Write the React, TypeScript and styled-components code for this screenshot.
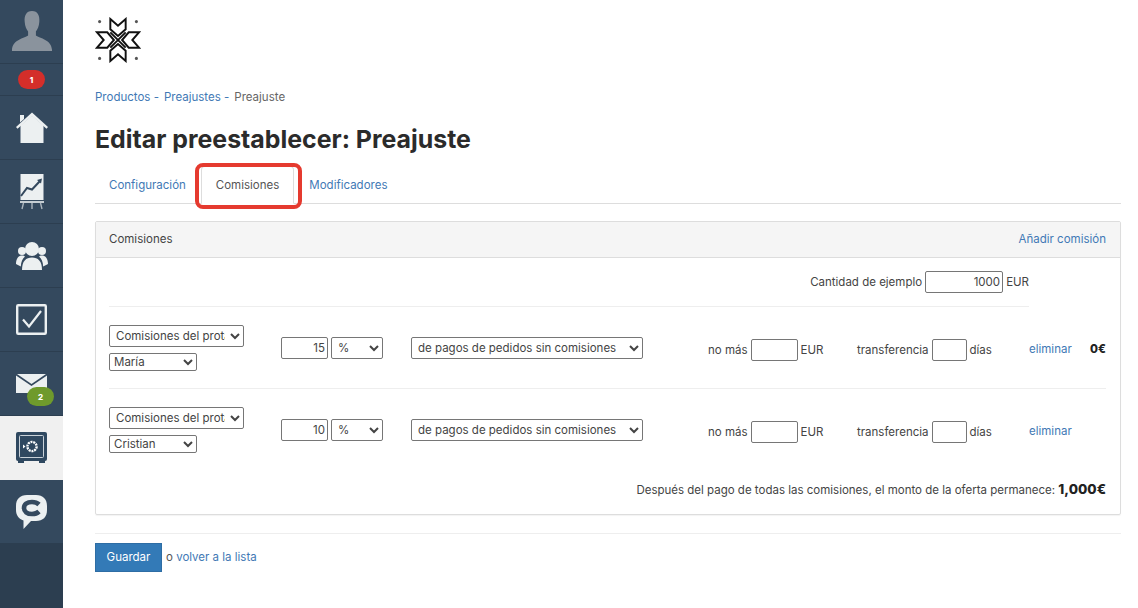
import React from 'react';
import styled, { createGlobalStyle } from 'styled-components';

const GlobalStyle = createGlobalStyle`
  html, body {
    margin: 0;
    padding: 0;
    background: #fff;
  }
  body {
    font-family: 'Inter', 'Liberation Sans', sans-serif;
    font-size: 11.5px;
    color: #444;
  }
  * {
    box-sizing: border-box;
  }
`;

const Page = styled.div`
  display: flex;
  width: 1138px;
  height: 608px;
  overflow: hidden;
`;

const Sidebar = styled.nav`
  flex: 0 0 63px;
  background: #2c3e50;
  display: flex;
  flex-direction: column;
`;

const NavItem = styled.div<{ $active?: boolean; $h?: number }>`
  position: relative;
  height: ${(p) => p.$h ?? 64}px;
  display: flex;
  align-items: center;
  justify-content: center;
  background: ${(p) => (p.$active ? '#f0f0f0' : '#34495e')};
  border-bottom: 1px solid ${(p) => (p.$active ? '#f0f0f0' : '#2c3e50')};
`;

const Badge = styled.span<{ $green?: boolean }>`
  background: ${(p) => (p.$green ? '#6f9a2c' : '#d42e2a')};
  color: #fff;
  font-size: 8px;
  font-weight: 800;
  width: 27px;
  height: 19px;
  border-radius: 10px;
  display: flex;
  align-items: center;
  justify-content: center;
`;

const MailBadge = styled(Badge)`
  position: absolute;
  left: 27px;
  top: 35px;
`;

const Main = styled.main`
  flex: 1;
  padding: 17px 17px 0 32px;
  min-width: 0;
`;

const Logo = styled.div`
  height: 45px;
  margin-bottom: 27px;
  svg {
    display: block;
  }
`;

const Breadcrumb = styled.div`
  display: flex;
  height: 17px;
  line-height: 17px;
  color: #666;
  margin-bottom: 18px;
  a {
    color: #4279b5;
    text-decoration: none;
    margin-right: 5px;
  }
`;

const Title = styled.h1`
  margin: 0 0 12px;
  font-size: 24.9px;
  line-height: 30px;
  font-weight: 700;
  color: #2b2b2b;
`;

const Tabs = styled.div`
  display: flex;
  height: 38px;
  border-bottom: 1px solid #ddd;
`;

const Tab = styled.div<{ $active?: boolean }>`
  position: relative;
  height: 38px;
  padding: 0 14px;
  display: flex;
  align-items: center;
  color: ${(p) => (p.$active ? '#555' : '#4279b5')};
  background: ${(p) => (p.$active ? '#fff' : 'transparent')};
  border: 1px solid ${(p) => (p.$active ? '#ddd' : 'transparent')};
  border-bottom-color: ${(p) => (p.$active ? '#fff' : 'transparent')};
  border-radius: 4px 4px 0 0;
  &:first-child {
    margin-left: -1px;
  }
`;

const Highlight = styled.span`
  position: absolute;
  z-index: 1;
  left: -7px;
  right: -9px;
  top: -4px;
  bottom: -6px;
  border: 4px solid #e53a2f;
  border-radius: 8px;
  pointer-events: none;
`;

const Panel = styled.section`
  margin-top: 17px;
  height: 294px;
  border: 1px solid #ddd;
  box-shadow: 0 1px 1px rgba(0, 0, 0, 0.05);
  border-radius: 2px;
`;

const PanelHeader = styled.header`
  height: 36px;
  padding: 0 14px 2px 13px;
  display: flex;
  align-items: center;
  justify-content: space-between;
  background: #f5f5f5;
  border-bottom: 1px solid #ddd;
  a {
    color: #4279b5;
  }
`;

const PanelBody = styled.div`
  padding: 0 14px 0 13px;
`;

const ExampleRow = styled.div`
  height: 49px;
  width: 920px;
  padding-top: 13px;
  display: flex;
  justify-content: flex-end;
  align-items: flex-start;
  gap: 3px;
  line-height: 22px;
  border-bottom: 1px solid #eee;
`;

const Rule = styled.div<{ $last?: boolean }>`
  height: 82px;
  display: grid;
  grid-template-columns: 172px 130px 297px 149px 172px 60px 17px;
  align-items: center;
  border-bottom: 1px solid ${(p) => (p.$last ? 'transparent' : '#eee')};
`;

const Stack = styled.div`
  display: flex;
  flex-direction: column;
  align-items: flex-start;
  gap: 6px;
  padding-top: 1px;
`;

const Inline = styled.div`
  display: flex;
  align-items: center;
  gap: 3px;
  line-height: 21px;
`;

const LimitCell = styled(Inline)`
  padding-top: 5px;
`;

const NativeSelect = styled.select<{ $w: number; $h?: number; $pad?: number }>`
  width: ${(p) => p.$w}px;
  height: ${(p) => p.$h ?? 22}px;
  padding: 0 ${(p) => p.$pad ?? 2}px;
  font: 11.5px 'Inter', 'Liberation Sans', sans-serif;
  color: #444;
  background: #fff;
  border: 1px solid #767676;
  border-radius: 2px;
`;

const NumberBox = styled.input<{ $w: number }>`
  width: ${(p) => p.$w}px;
  height: 22px;
  padding: 0 2px;
  font: 11.5px 'Inter', 'Liberation Sans', sans-serif;
  color: #444;
  text-align: right;
  background: #fff;
  border: 1px solid #767676;
  border-radius: 2px;
`;

const RemoveLink = styled.a`
  color: #4279b5;
  margin-top: 2px;
`;

const Amount = styled.b`
  justify-self: end;
  font-weight: 800;
  color: #222;
  margin-top: 2px;
`;

const Total = styled.div`
  margin-top: 9px;
  text-align: right;
  line-height: 18px;
  b {
    font-size: 13.5px;
    font-weight: 800;
    color: #222;
  }
`;

const Actions = styled.div`
  margin-top: 18px;
  padding-top: 9px;
  border-top: 1px solid #eee;
  display: flex;
  align-items: center;
  gap: 4px;
  color: #555;
  span {
    margin-top: -2px;
  }
  a {
    color: #4279b5;
  }
`;

const SaveButton = styled.button`
  width: 67px;
  height: 29px;
  padding: 0 0 2px;
  font: 11.5px 'Inter', 'Liberation Sans', sans-serif;
  color: #fff;
  background: #337ab7;
  border: 1px solid #2e6da4;
`;

const SnowLogo = () => (
  <svg width="46" height="46" viewBox="0 0 45 45" fill="none" stroke="#111" strokeWidth="1.9">
    <path d="M15 2 L22.5 8.5 L30 2 V12 L22.5 18.5 L15 12 Z" />
    <path d="M15 43 L22.5 36.5 L30 43 V33 L22.5 26.5 L15 33 Z" />
    <path d="M2 15 L8.5 22.5 L2 30 H12 L18.5 22.5 L12 15 Z" />
    <path d="M43 15 L36.5 22.5 L43 30 H33 L26.5 22.5 L33 15 Z" />
    <path d="M15 15 L30 30 M30 15 L15 30" strokeWidth="1.8" />
    <g fill="#555" stroke="none">
      <circle cx="4.5" cy="4.5" r="1.5" />
      <circle cx="40.5" cy="4.5" r="1.5" />
      <circle cx="4.5" cy="40.5" r="1.5" />
      <circle cx="40.5" cy="40.5" r="1.5" />
    </g>
  </svg>
);

const UserIcon = () => (
  <svg width="42" height="41" viewBox="0 0 42 42" fill="#8a939d">
    <path d="M21 0 C27 0 29 5 28.5 11 C28.2 16 26.5 19 25 21 V25 C29 28 41 29 41.5 40 V41 H0.5 V40 C1 29 13 28 17 25 V21 C15.5 19 13.8 16 13.5 11 C13 5 15 0 21 0 Z" />
  </svg>
);

const HomeIcon = () => (
  <svg width="32" height="31" viewBox="0 0 32 31" fill="#ecf0f1">
    <path d="M4.5 13.5 L16 3.5 L27.5 13.5 V31 H4.5 Z" />
    <path d="M0 15 L16 0.5 L32 15 L30.5 16.8 L16 4 L1.5 16.8 Z" />
    <path d="M4 3 H8 V7 L4 10.5 Z" />
  </svg>
);

const ChartIcon = () => (
  <svg width="24" height="36" viewBox="0 0 24 36" fill="none">
    <rect x="0.5" y="0" width="23" height="26" fill="#ecf0f1" />
    <path d="M1 22 L7 14 L12 15.5 L20 7" stroke="#34495e" strokeWidth="2" />
    <path d="M17 6 L22 4.5 L21 9.5 Z" fill="#34495e" />
    <path d="M0 28 H24" stroke="#ecf0f1" strokeWidth="1.6" />
    <path d="M3.5 29 L2 35 M12 29 V35 M20.5 29 L22 35" stroke="#aab4bd" strokeWidth="1.4" />
  </svg>
);

const UsersIcon = () => (
  <svg width="32" height="28" viewBox="0 0 32 28" fill="#ecf0f1">
    <circle cx="16" cy="7" r="7" />
    <path d="M6 28 C6 19 10 15.5 16 15.5 C22 15.5 26 19 26 28 Z" />
    <circle cx="6" cy="9" r="4" />
    <circle cx="26" cy="9" r="4" />
    <path d="M0 22 C0 16 3 13.5 6 13.5 C7.5 13.5 8.5 14 9 14.5 C6.5 16.5 5 20 4.8 24.5 Z" />
    <path d="M32 22 C32 16 29 13.5 26 13.5 C24.5 13.5 23.5 14 23 14.5 C25.5 16.5 27 20 27.2 24.5 Z" />
  </svg>
);

const CheckIcon = () => (
  <svg width="31" height="31" viewBox="0 0 31 31" fill="none">
    <rect x="1.2" y="1.2" width="28.6" height="28.6" rx="1" stroke="#ecf0f1" strokeWidth="2.4" />
    <path d="M7 15.5 L13 22.5 L25 7" stroke="#ecf0f1" strokeWidth="2.2" />
  </svg>
);

const MailIcon = () => (
  <svg width="31" height="19" viewBox="0 0 31 19" fill="#ecf0f1">
    <path d="M1 0 H30 L15.5 10 Z" />
    <path d="M0 1.5 L15.5 12 L31 1.5 V19 H0 Z" />
  </svg>
);

const SafeIcon = () => (
  <svg width="31" height="31" viewBox="0 0 31 31" fill="none">
    <rect x="0" y="0" width="31" height="29" rx="2" fill="#2f4860" />
    <rect x="2" y="29" width="6" height="2" fill="#2f4860" />
    <rect x="23" y="29" width="6" height="2" fill="#2f4860" />
    <rect x="3.5" y="3.5" width="24" height="22" rx="1" stroke="#c9d1d8" strokeWidth="1" />
    <circle cx="16" cy="14.5" r="4.6" stroke="#fff" strokeWidth="2.4" strokeDasharray="2 0.8" />
    <path d="M7 12.5 L9.5 14.5 L7 16.5 Z" fill="#fff" />
  </svg>
);

const ChatIcon = () => (
  <svg width="31" height="34" viewBox="0 0 31 34" fill="#ecf0f1">
    <path d="M11 0 H20 C27 0 31 4 31 11 V15 C31 22 27 26 20 26 H15 L7.5 34 V25.5 C3 24 0 20.5 0 15 V11 C0 4 4 0 11 0 Z" />
    <path
      d="M23 9.5 C21.5 8 19 7 16 7 C11 7 8 9.5 8 13 C8 16.5 11 19 16 19 C19 19 21.5 18 23 16.5"
      stroke="#34495e"
      strokeWidth="4.6"
      fill="none"
    />
  </svg>
);

type RuleData = {
  person: string;
  percent: string;
  amount?: string;
};

const rules: RuleData[] = [
  { person: 'María', percent: '15', amount: '0€' },
  { person: 'Cristian', percent: '10' },
];

const App = () => {
  return (
    <Page>
      <GlobalStyle />
      <Sidebar>
        <NavItem><UserIcon /></NavItem>
        <NavItem $h={32}><Badge>1</Badge></NavItem>
        <NavItem><HomeIcon /></NavItem>
        <NavItem><ChartIcon /></NavItem>
        <NavItem><UsersIcon /></NavItem>
        <NavItem><CheckIcon /></NavItem>
        <NavItem>
          <MailIcon />
          <MailBadge $green>2</MailBadge>
        </NavItem>
        <NavItem $active><SafeIcon /></NavItem>
        <NavItem><ChatIcon /></NavItem>
      </Sidebar>
      <Main>
        <Logo><SnowLogo /></Logo>
        <Breadcrumb>
          <a>Productos -</a>
          <a>Preajustes -</a>
          <span>Preajuste</span>
        </Breadcrumb>
        <Title>Editar preestablecer: Preajuste</Title>
        <Tabs>
          <Tab>Configuración</Tab>
          <Tab $active>
            Comisiones
            <Highlight />
          </Tab>
          <Tab>Modificadores</Tab>
        </Tabs>
        <Panel>
          <PanelHeader>
            <span>Comisiones</span>
            <a>Añadir comisión</a>
          </PanelHeader>
          <PanelBody>
            <ExampleRow>
              Cantidad de ejemplo
              <NumberBox $w={78} defaultValue="1000" />
              EUR
            </ExampleRow>
            {rules.map((rule, i) => (
              <Rule key={rule.person} $last={i === rules.length - 1}>
                <Stack>
                  <NativeSelect $w={135} defaultValue="a">
                    <option value="a">Comisiones del protagonista</option>
                  </NativeSelect>
                  <NativeSelect $w={88} $h={18} $pad={0} defaultValue="a">
                    <option value="a">{rule.person}</option>
                  </NativeSelect>
                </Stack>
                <Inline>
                  <NumberBox $w={47} defaultValue={rule.percent} />
                  <NativeSelect $w={52} defaultValue="a">
                    <option value="a">%</option>
                  </NativeSelect>
                </Inline>
                <NativeSelect $w={232} defaultValue="a">
                  <option value="a">de pagos de pedidos sin comisiones</option>
                </NativeSelect>
                <LimitCell>
                  no más
                  <NumberBox $w={47} />
                  EUR
                </LimitCell>
                <LimitCell>
                  transferencia
                  <NumberBox $w={35} />
                  días
                </LimitCell>
                <RemoveLink>eliminar</RemoveLink>
                {rule.amount ? <Amount>{rule.amount}</Amount> : <span />}
              </Rule>
            ))}
            <Total>
              Después del pago de todas las comisiones, el monto de la oferta permanece: <b>1,000€</b>
            </Total>
          </PanelBody>
        </Panel>
        <Actions>
          <SaveButton>Guardar</SaveButton>
          <span>o <a>volver a la lista</a></span>
        </Actions>
      </Main>
    </Page>
  );
};

export default App;
